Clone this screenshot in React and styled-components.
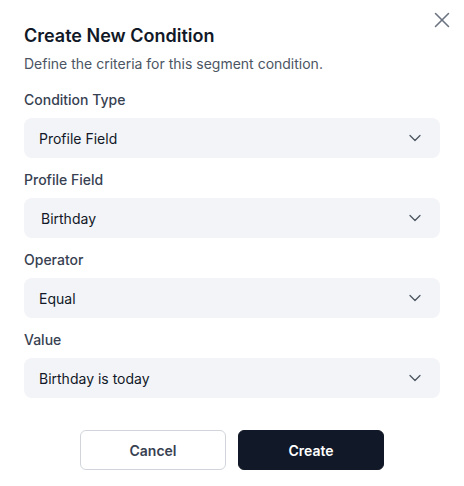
import React from "react";
import styled, { createGlobalStyle } from "styled-components";
import { ChevronDown, X } from "lucide-react";

const Global = createGlobalStyle`
  html, body { margin: 0; padding: 0; background: #ffffff; }
  body { font-family: Inter, "Noto Sans", sans-serif; -webkit-font-smoothing: antialiased; }
  * { box-sizing: border-box; }
`;

const Dialog = styled.div`
  position: relative;
  width: 464px;
  height: 486px;
  padding: 24px 24px 16px;
  display: flex;
  flex-direction: column;
  background: #ffffff;
`;

const CloseButton = styled.button`
  position: absolute;
  top: 7px;
  right: 9px;
  width: 26px;
  height: 26px;
  padding: 0;
  border: none;
  background: none;
  color: #6b7280;
  display: flex;
  align-items: center;
  justify-content: center;
`;

const Title = styled.h2`
  margin: 0;
  font-size: 18px;
  line-height: 24px;
  font-weight: 600;
  color: #111827;
`;

const Subtitle = styled.p`
  margin: 6px 0 0;
  font-size: 14px;
  line-height: 20px;
  color: #4b5563;
`;

const Fields = styled.div`
  margin-top: 16px;
  display: flex;
  flex-direction: column;
  gap: 12px;
`;

const Field = styled.div`
  display: flex;
  flex-direction: column;
  gap: 8px;
`;

const Label = styled.label`
  font-size: 14px;
  line-height: 20px;
  font-weight: 500;
  color: #374151;
`;

const SelectBox = styled.div`
  height: 40px;
  border-radius: 8px;
  background: #f3f4f7;
  display: flex;
  align-items: center;
  justify-content: space-between;
  padding: 0 15px 0 ${(p) => p.$indent}px;
  font-size: 14px;
  color: #111827;
  svg { color: #4b5563; }
`;

const Actions = styled.div`
  margin-top: 32px;
  display: flex;
  justify-content: center;
  gap: 12px;
`;

const Button = styled.button`
  width: 146px;
  height: 40px;
  border-radius: 6px;
  font-family: inherit;
  font-size: 14px;
  font-weight: 600;
  border: 1px solid ${(p) => (p.$primary ? "#111827" : "#d1d5db")};
  background: ${(p) => (p.$primary ? "#111827" : "#ffffff")};
  color: ${(p) => (p.$primary ? "#ffffff" : "#374151")};
`;

const fields = [
  { label: "Condition Type", value: "Profile Field", indent: 15 },
  { label: "Profile Field", value: "Birthday", indent: 17 },
  { label: "Operator", value: "Equal", indent: 15 },
  { label: "Value", value: "Birthday is today", indent: 15 },
];

export default function App() {
  return (
    <>
      <Global />
      <Dialog>
        <CloseButton aria-label="Close">
          <X size={26} strokeWidth={1.4} />
        </CloseButton>
        <Title>Create New Condition</Title>
        <Subtitle>Define the criteria for this segment condition.</Subtitle>
        <Fields>
          {fields.map((f) => (
            <Field key={f.label}>
              <Label>{f.label}</Label>
              <SelectBox $indent={f.indent}>
                <span>{f.value}</span>
                <ChevronDown size={20} strokeWidth={1.5} />
              </SelectBox>
            </Field>
          ))}
        </Fields>
        <Actions>
          <Button>Cancel</Button>
          <Button $primary>Create</Button>
        </Actions>
      </Dialog>
    </>
  );
}
